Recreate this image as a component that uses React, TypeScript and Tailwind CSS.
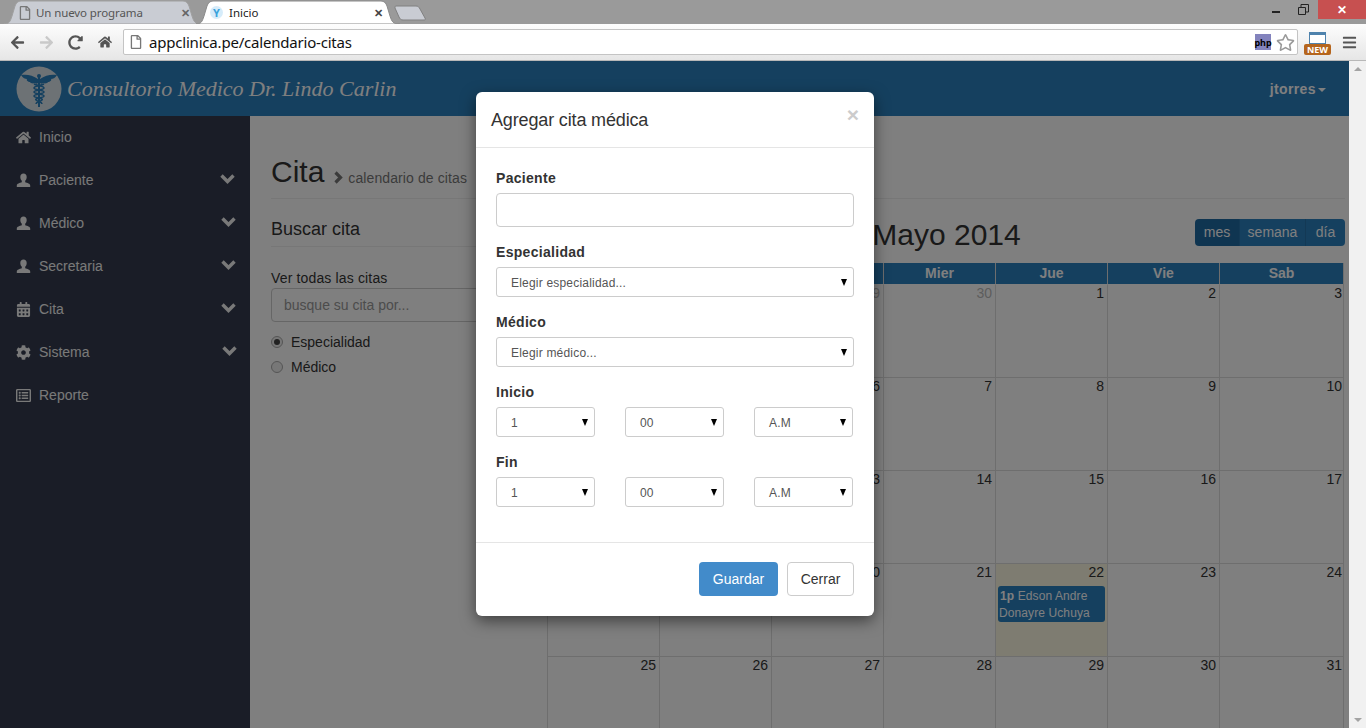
import React from "react"
import { FaHome, FaCalendarAlt, FaCog, FaRegListAlt, FaArrowLeft, FaArrowRight, FaRedoAlt, FaRegStar, FaBars, FaRegFile } from "react-icons/fa"

const Caduceus = ({ size }: { size: number }) => (
    <svg width={size} height={size} viewBox="0 0 46 46">
        <circle cx="23" cy="23" r="22.5" fill="#dbe4ea" />
        <path d="M22 13C17 9 10 8 5 9c2 3 4 4 6 4-1 1 1 3 3 3 0 1 3 2 5 1 1 1 2 1 3 0z" fill="#2a80be" />
        <path d="M24 13c5-4 12-5 17-4-2 3-4 4-6 4 1 1-1 3-3 3 0 1-3 2-5 1-1 1-2 1-3 0z" fill="#2a80be" />
        <rect x="22" y="9" width="2" height="32" fill="#2a80be" />
        <circle cx="23" cy="10" r="2" fill="#2a80be" />
        <path d="M18 18c4 2 10 2 10 4s-10 2-10 4 10 2 10 4-10 2-8 4 6 2 6 4" fill="none" stroke="#2a80be" strokeWidth="1.6" />
        <path d="M28 18c-4 2-10 2-10 4s10 2 10 4-10 2-10 4 10 2 8 4-6 2-6 4" fill="none" stroke="#2a80be" strokeWidth="1.6" />
    </svg>
)

const UserIcon = () => (
    <svg width="15" height="15" viewBox="0 0 15 15" fill="currentColor">
        <path d="M7.500.5c2 0 3.200 1.500 3.200 3.500 0 1.500-.6 3-1.500 3.800v1.400c2 .8 5 1.300 5 3.300v1.500H.8V12.500c0-2 3-2.500 5-3.300V7.800C4.900 7 4.300 5.500 4.300 4c0-2 1.200-3.500 3.200-3.500z" />
    </svg>
)

const ChevronDown = () => (
    <svg width="15" height="11" viewBox="0 0 15 11" fill="none" stroke="currentColor" strokeWidth="3.400">
        <path d="M1.500 2.500l6 6 6-6" />
    </svg>
)

const Tab = ({ active, width, className, children }: { active?: boolean, width: number, className: string, children: React.ReactNode }) => (
    <div className={`relative h-[24px] shrink-0 ${className}`} style={{ width }}>
        <svg className="absolute inset-0" width={width} height={24}>
            <path d={`M0 24c5 0 6-2 8-8l3-10c1-3 3-5 6-5h${width - 36}c3 0 5 2 6 5l3 10c2 6 3 8 10 8z`} fill={active ? "#ffffff" : "#c9ccd3"} stroke={active ? "#8a8a8a" : "#a0a0a0"} />
        </svg>
        <div className="relative flex h-full items-center pt-px">{children}</div>
    </div>
)

const BrowserBar = () => (
    <div className="h-[61px] shrink-0 font-['Noto_Sans',sans-serif]">
        <div className="flex h-[24px] items-start bg-[#9a9a9a]">
            <Tab width={198} className="ml-[4px]">
                <FaRegFile className="ml-[15px] h-[14px] w-[12px] text-[#777777]" />
                <span className="ml-[5px] text-[11.5px] tracking-[-0.1px] text-[#555555]">Un nuevo programa</span>
                <span className="absolute right-[12px] top-[5px] text-[11px] font-bold text-[#666666]">✕</span>
            </Tab>
            <Tab active width={204} className="z-10 -ml-[6px]">
                <span className="ml-[14px] flex h-[13px] w-[13px] items-center justify-center rounded-full bg-[#d6ecfa] text-[11px] font-bold leading-none text-[#38a3dc]">Y</span>
                <span className="ml-[6px] text-[11.5px] text-[#222222]">Inicio</span>
                <span className="absolute right-[17px] top-[5px] text-[11px] font-bold text-[#444444]">✕</span>
            </Tab>
            <svg className="-ml-[6px] mt-[5px]" width="34" height="16">
                <path d="M2 1h20c2 0 3 1 4 3l5 9c1 2 0 2-2 2H9c-2 0-3-1-4-3L1 3C1 2 1 1 2 1z" fill="#c9ccd3" stroke="#808080" />
            </svg>
            <div className="ml-auto flex h-[19px] items-start">
                <div className="mt-[11px] h-[2px] w-[8px] bg-[#222222]" />
                <svg className="ml-[18px] mt-[4px]" width="11" height="11">
                    <path d="M0.500 3.500h7v7h-7zM3 3V0.500h7.500V8H8" fill="none" stroke="#222222" />
                </svg>
                <div className="ml-[9px] flex h-[19px] w-[48px] items-center justify-center bg-[#c75050] text-[12px] font-bold leading-none text-white">✕</div>
            </div>
        </div>
        <div className="flex h-[37px] items-center border-b border-[#b8b8b8] bg-gradient-to-b from-[#fdfdfd] to-[#e6e6e6] pl-[10px]">
            <FaArrowLeft className="h-[15px] w-[15px] text-[#555555]" />
            <FaArrowRight className="ml-[14px] h-[15px] w-[15px] text-[#c9c9c9]" />
            <FaRedoAlt className="ml-[14px] h-[15px] w-[15px] text-[#555555]" />
            <FaHome className="ml-[15px] h-[14px] w-[14px] text-[#555555]" />
            <div className="ml-[11px] flex h-[26px] w-[1175px] items-center rounded-[2px] border border-[#c4c4c4] bg-white pl-[6px]">
                <FaRegFile className="h-[14px] w-[12px] text-[#777777]" />
                <span className="ml-[7px] text-[15px] leading-none tracking-[-0.2px] text-[#111111]">appclinica.pe/calendario-citas</span>
                <div className="ml-auto flex h-[16px] w-[16px] items-center justify-center bg-[#8383bd] text-[9px] font-bold leading-none text-black">php</div>
                <FaRegStar className="ml-[5px] mr-[2px] h-[19px] w-[19px] text-[#9a9a9a]" />
            </div>
            <div className="relative ml-[5px] h-[26px] w-[30px]">
                <div className="absolute left-[6px] top-[3px] h-[12px] w-[17px] border border-[#4f83ad] border-t-[3px] bg-white" />
                <div className="absolute bottom-0 left-[1px] flex h-[11px] w-[27px] items-center justify-center rounded-[2px] bg-[#b5651d] text-[9px] font-bold leading-none text-white">NEW</div>
            </div>
            <FaBars className="ml-[9px] h-[15px] w-[15px] text-[#555555]" />
        </div>
    </div>
)

const menuItems = [
    { label: "Inicio", icon: <FaHome className="h-[15px] w-[15px]" /> },
    { label: "Paciente", icon: <UserIcon />, more: "mr-[1px]" },
    { label: "Médico", icon: <UserIcon />, more: "mr-0" },
    { label: "Secretaria", icon: <UserIcon />, more: "mr-0" },
    { label: "Cita", icon: <FaCalendarAlt className="h-[15px] w-[15px]" />, more: "mr-0" },
    { label: "Sistema", icon: <FaCog className="h-[15px] w-[15px]" />, more: "-mr-[1px]" },
    { label: "Reporte", icon: <FaRegListAlt className="h-[15px] w-[15px]" /> },
]

const Sidebar = () => (
    <div className="w-[250px] shrink-0 bg-[#343b4e]">
        {menuItems.map((item) => (
            <div key={item.label} className="flex h-[43px] items-center pl-[16px] pr-[14px] text-[14px] text-[#f2f2f2]">
                {item.icon}
                <span className="ml-[8px]">{item.label}</span>
                {item.more && <span className={`-mt-[4px] ml-auto ${item.more}`}><ChevronDown /></span>}
            </div>
        ))}
    </div>
)

const weeks = [
    [27, 28, 29, 30, 1, 2, 3],
    [4, 5, 6, 7, 8, 9, 10],
    [11, 12, 13, 14, 15, 16, 17],
    [18, 19, 20, 21, 22, 23, 24],
    [25, 26, 27, 28, 29, 30, 31],
]

const Calendar = () => (
    <div className="w-[797px] shrink-0">
        <div className="grid h-[45px] grid-cols-[1fr_auto_1fr]">
            <div />
            <div className="pl-[2px] text-[30px] leading-[33px] text-[#333333]">Mayo 2014</div>
            <div className="-mr-px flex items-start justify-end pt-px">
                <div className="flex h-[27px] overflow-hidden rounded-[4px] text-[14px] text-white">
                    <div className="flex w-[44px] items-center justify-center bg-[#1f6ba3]">mes</div>
                    <div className="flex w-[67px] items-center justify-center border-x border-[#2673ab] bg-[#2a80be]">semana</div>
                    <div className="flex w-[39px] items-center justify-center bg-[#2a80be]">día</div>
                </div>
            </div>
        </div>
        <div className="grid grid-cols-[112px_112px_112px_112px_112px_112px_124px] border-r border-[#dddddd]">
            {["Dom", "Lun", "Mar", "Mier", "Jue", "Vie", "Sab"].map((d) => (
                <div key={d} className="h-[22px] border-b border-l border-b-white border-l-[#dddddd] bg-[#2a80be] text-center text-[14px] font-bold leading-[20px] text-white">{d}</div>
            ))}
            {weeks.flatMap((week, w) => week.map((day, i) => {
                const other = w === 0 && i < 4
                const today = w === 3 && i === 4
                return (
                    <div key={`${w}-${i}`} className={`h-[93px] border-b border-l border-[#dddddd] text-right text-[14px] leading-[16px] ${i === 6 ? "pr-[1px]" : "pr-[3px]"} ${other ? "text-[#bbbbbb]" : "text-[#333333]"} ${today ? "bg-[#fcf8e3]" : ""}`}>
                        {day}
                        {today && (
                            <div className="-mr-px ml-[2px] mt-[6px] h-[36px] rounded-[3px] bg-[#2a80be] pl-px pt-[2px] text-left text-[12px] leading-[17px] tracking-[0.1px] text-white">
                                <b className="pl-[1px]">1p</b> Edson Andre Donayre Uchuya
                            </div>
                        )}
                    </div>
                )
            }))}
        </div>
    </div>
)

const Page = () => (
    <div className="flex min-w-0 flex-1 flex-col">
        <div className="flex h-[55px] shrink-0 items-center bg-[#2a80be] pl-[16px] pr-[23px] text-white">
            <Caduceus size={46} />
            <span className="ml-[5px] font-['Liberation_Serif',serif] text-[22px] italic leading-none">Consultorio Medico Dr. Lindo Carlin</span>
            <span className="ml-auto mt-[2px] text-[14px] font-bold tracking-[0.4px]">jtorres</span>
            <span className="ml-[2px] mt-[2px] h-0 w-0 border-x-[4px] border-t-[4px] border-x-transparent border-t-white" />
        </div>
        <div className="flex min-h-0 flex-1">
            <Sidebar />
            <div className="min-w-0 flex-1 bg-white pl-[21px] pr-[4px] pt-[39px] text-[#333333]">
                <div className="flex h-[44px] items-baseline border-b border-[#eeeeee] leading-[33px]">
                    <span className="text-[30px]">Cita</span>
                    <svg className="ml-[9px] mt-[16px] self-start text-[#777777]" width="11" height="13" viewBox="0 0 11 13" fill="none" stroke="currentColor" strokeWidth="3.200">
                        <path d="M2.500 1.500l5 5-5 5" />
                    </svg>
                    <span className="ml-[4px] translate-y-px text-[14px] tracking-[0.1px] text-[#777777]">calendario de citas</span>
                </div>
                <div className="flex gap-[20px] pt-[19px]">
                    <div className="w-[256px] shrink-0">
                        <div className="mt-[2px] border-b border-[#eeeeee] pb-[8px] text-[18px] leading-[18px]">Buscar cita</div>
                        <div className="mt-[21px] text-[14px] leading-[20px] tracking-[0.15px]">Ver todas las citas</div>
                        <div className="flex h-[34px] items-center rounded-[4px] border border-[#cccccc] pl-[12px] text-[14px] text-[#999999]">busque su cita por...</div>
                        <div className="mt-[10px] flex h-[20px] items-center text-[14px]">
                            <span className="flex h-[12px] w-[12px] items-center justify-center rounded-full border border-[#aaaaaa] bg-[#eeeeee]"><span className="h-[6px] w-[6px] rounded-full bg-[#444444]" /></span>
                            <span className="ml-[8px]">Especialidad</span>
                        </div>
                        <div className="mt-[5px] flex h-[20px] items-center text-[14px]">
                            <span className="h-[12px] w-[12px] rounded-full border border-[#aaaaaa] bg-[#eeeeee]" />
                            <span className="ml-[8px]">Médico</span>
                        </div>
                    </div>
                    <Calendar />
                </div>
            </div>
        </div>
    </div>
)

const Select = ({ label, className }: { label: string, className: string }) => (
    <div className={`flex h-[30px] items-center justify-between rounded-[3px] border border-[#cccccc] pl-[14px] pr-[6px] pt-px text-[12px] tracking-[0.2px] text-[#555555] ${className}`}>
        <span>{label}</span>
        <span className="-mt-px h-0 w-0 border-x-[3.5px] border-t-[7px] border-x-transparent border-t-black" />
    </div>
)

const TimeRow = () => (
    <div className="flex gap-[30px]">
        <Select label="1" className="w-[99px]" />
        <Select label="00" className="w-[99px]" />
        <Select label="A.M" className="w-[99px]" />
    </div>
)

const FieldLabel = ({ children }: { children: React.ReactNode }) => (
    <div className="mb-[5px] mt-[15px] text-[14px] font-bold leading-[20px] tracking-[0.3px] text-[#333333] first:mt-0">{children}</div>
)

const Modal = () => (
    <div className="absolute inset-0 z-20 bg-black/50">
        <div className="absolute left-[476px] top-[31px] w-[398px] rounded-[6px] bg-white text-[#333333] shadow-[0_5px_15px_rgba(0,0,0,0.5)]">
            <div className="flex items-start justify-between border-b border-[#e5e5e5] px-[15px] pb-[14px] pt-[16px]">
                <div className="text-[18px] leading-[25px] tracking-[-0.15px]">Agregar cita médica</div>
                <div className="-mt-[4px] text-[21px] font-bold leading-[21px] text-[#cccccc]">×</div>
            </div>
            <div className="px-[20px] pb-[35px] pt-[20px]">
                <FieldLabel>Paciente</FieldLabel>
                <div className="h-[34px] rounded-[4px] border border-[#cccccc]" />
                <FieldLabel>Especialidad</FieldLabel>
                <Select label="Elegir especialidad..." className="w-full" />
                <FieldLabel>Médico</FieldLabel>
                <Select label="Elegir médico..." className="w-full" />
                <FieldLabel>Inicio</FieldLabel>
                <TimeRow />
                <FieldLabel>Fin</FieldLabel>
                <TimeRow />
            </div>
            <div className="flex justify-end gap-[9px] border-t border-[#e5e5e5] px-[20px] pb-[20px] pt-[19px] text-[14px]">
                <div className="flex h-[34px] w-[79px] items-center justify-center rounded-[4px] bg-[#428bca] text-white">Guardar</div>
                <div className="flex h-[34px] w-[67px] items-center justify-center rounded-[4px] border border-[#cccccc]">Cerrar</div>
            </div>
        </div>
    </div>
)

const App: React.FC = () => {
    return (
        <div className="relative flex h-[728px] w-[1366px] flex-col overflow-hidden bg-white font-['Liberation_Sans',Arial,sans-serif]">
            <BrowserBar />
            <div className="flex min-h-0 flex-1">
                <div className="relative flex min-w-0 flex-1">
                    <Page />
                    <Modal />
                </div>
                <div className="flex w-[17px] shrink-0 flex-col items-center justify-between bg-[#f1f1f1] py-[6px]">
                    <span className="h-0 w-0 border-x-[4px] border-b-[4px] border-x-transparent border-b-[#a3a3a3]" />
                    <span className="h-0 w-0 border-x-[4px] border-t-[4px] border-x-transparent border-t-[#a3a3a3]" />
                </div>
            </div>
        </div>
    )
}

export default App
